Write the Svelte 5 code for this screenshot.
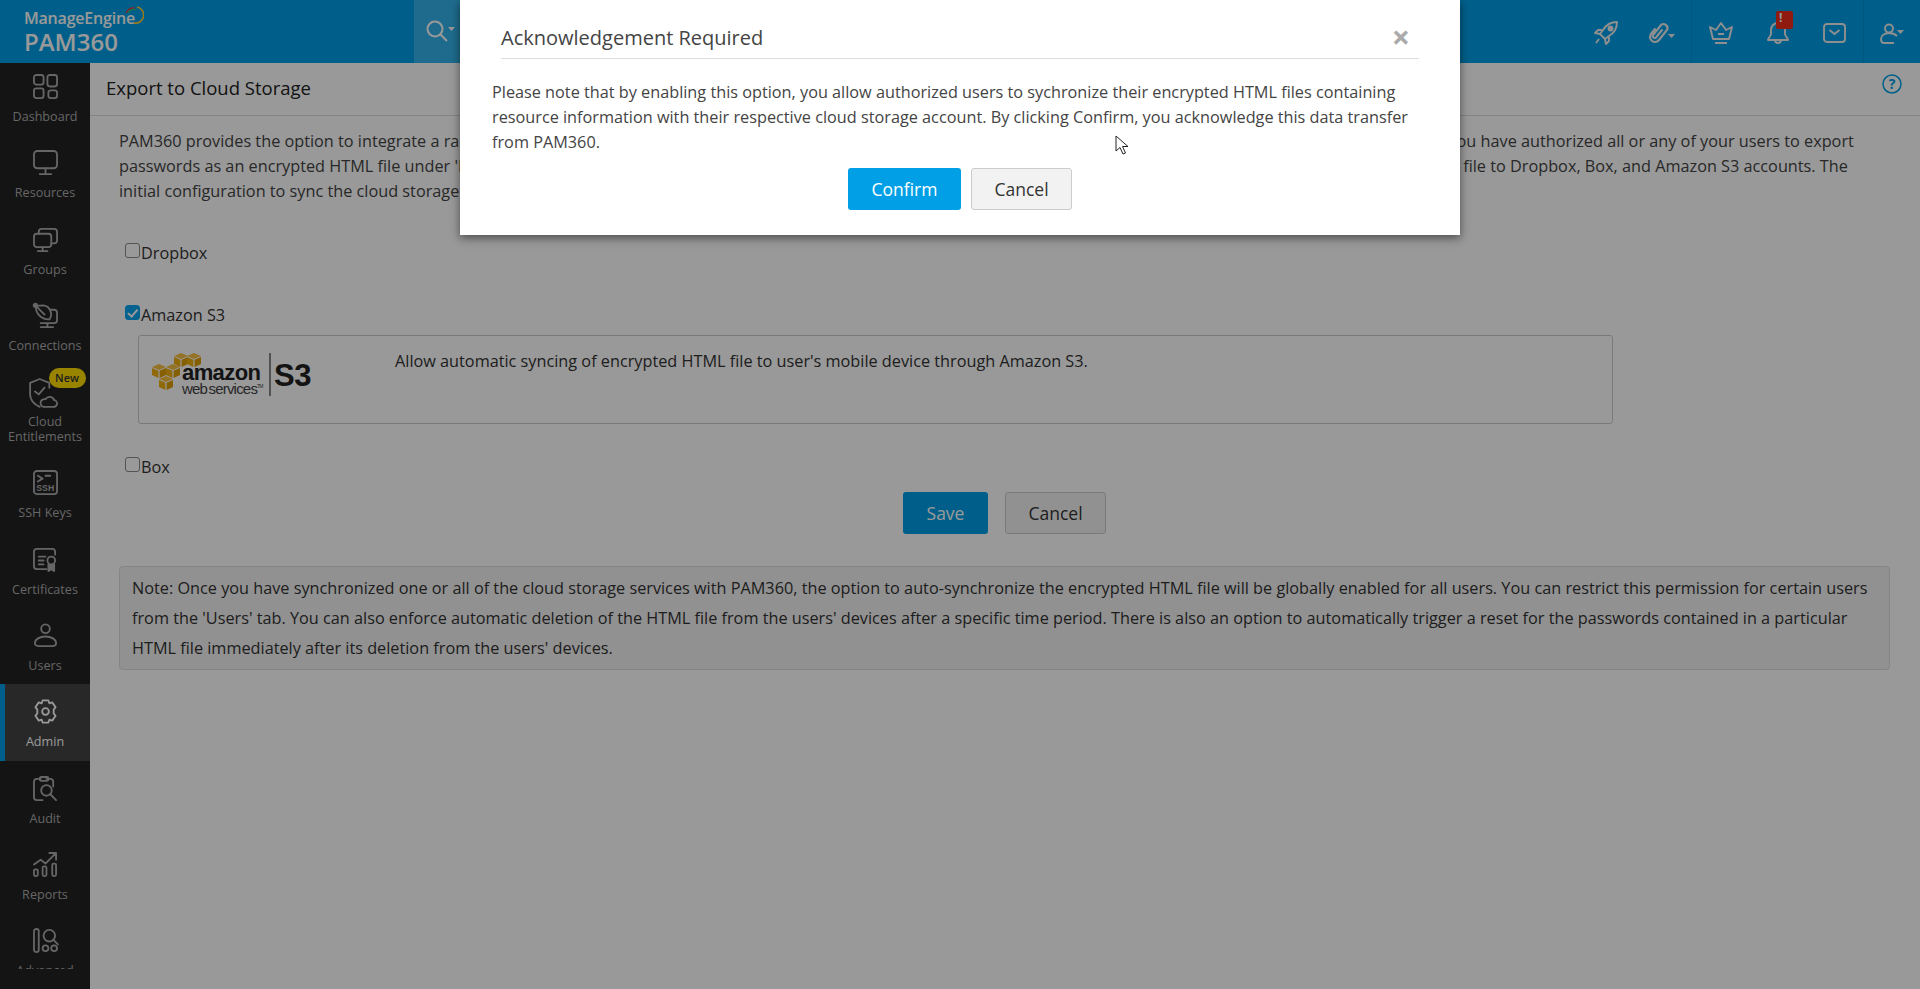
<script lang="ts">
	const navItems = [
		{ id: 'dashboard', label: 'Dashboard' },
		{ id: 'resources', label: 'Resources' },
		{ id: 'groups', label: 'Groups' },
		{ id: 'connections', label: 'Connections' },
		{ id: 'cloud', label: 'Cloud Entitlements', badge: 'New' },
		{ id: 'ssh', label: 'SSH Keys' },
		{ id: 'certificates', label: 'Certificates' },
		{ id: 'users', label: 'Users' },
		{ id: 'admin', label: 'Admin', active: true },
		{ id: 'audit', label: 'Audit' },
		{ id: 'reports', label: 'Reports' },
		{ id: 'advanced', label: 'Advanced' }
	];
	const cubes = [
		[22, 0], [35, 0], [0, 11], [14, 11], [7, 23]
	];
</script>

<div class="page">
	<header class="topbar">
		<div class="logo">
			<div class="me">ManageEngine<svg class="arc" viewBox="0 0 20 18" width="20" height="18"><path d="M2 7 A8 8 0 0 1 11 2" fill="none" stroke="#e33" stroke-width="1.2"/><path d="M4 7 A6 6 0 0 1 12 4" fill="none" stroke="#3b7" stroke-width="1.2"/><path d="M13 1 A8 8 0 0 1 10 17" fill="none" stroke="#fc3" stroke-width="1.6"/></svg></div>
			<div class="pam">PAM360</div>
		</div>
		<button class="search" aria-label="Search">
			<svg width="30" height="24" viewBox="0 0 30 24" fill="none" stroke="currentColor" stroke-width="2"><circle cx="10" cy="10" r="7.5"/><path d="M15.5 15.5 L22 22"/><path d="M23 8h7l-3.5 4z" fill="currentColor" stroke="none"/></svg>
		</button>
		<div class="spacer"></div>
		<div class="tools">
			<span class="tool">
				<svg width="26" height="26" viewBox="0 0 26 26" fill="none" stroke="currentColor" stroke-width="1.9" stroke-linejoin="round"><path d="M24 2c-6 0-11 3-14 8l-3 4 5 5 4-3c5-3 8-8 8-14z"/><circle cx="17.500" cy="8.500" r="2" fill="currentColor"/><path d="M9 10H5l-3 3 5 1M16 17v4l-3 3-1-5M6 19l-3 4"/></svg>
			</span>
			<span class="tool link">
				<svg width="34" height="26" viewBox="0 0 34 26" fill="none" stroke="currentColor" stroke-width="2.1" stroke-linecap="round"><path d="M16 10l-6 7.500a2 2 0 0 1-3-2.500l8-10a4 4 0 0 1 6 5l-8 10a5 5 0 0 1-8-6l4-5"/><path d="M22 14h7l-3.500 4z" fill="currentColor" stroke="none"/></svg>
			</span>
			<span class="tool sep-left">
				<svg width="24" height="26" viewBox="0 0 24 26" fill="none" stroke="currentColor" stroke-width="1.9" stroke-linejoin="round"><path d="M1 7l6 3 5-7 5 7 6-3-3 12H4z"/><path d="M9 14h6M6 23h12"/></svg>
			</span>
			<span class="tool bell">
				<svg width="26" height="26" viewBox="0 0 26 26" fill="none" stroke="currentColor" stroke-width="1.9" stroke-linejoin="round"><path d="M13 3c-4 0-7 3-7 7v4c0 2-3 4-3 6h20c0-2-3-4-3-6v-4c0-4-3-7-7-7zM10 20a3 3 0 0 0 6 0"/></svg>
				<span class="alert">!</span>
			</span>
			<span class="tool">
				<svg width="25" height="22" viewBox="0 0 25 22" fill="none" stroke="currentColor" stroke-width="1.9"><rect x="2" y="2" width="21" height="18" rx="3"/><path d="M7.500 8l5 4 5-4"/></svg>
			</span>
			<span class="tool sep-left user">
				<svg width="32" height="26" viewBox="0 0 32 26" fill="none" stroke="currentColor" stroke-width="1.9"><circle cx="13" cy="8.500" r="4"/><path d="M21 16c-2-2-5-3-8-3-5 0-8 3-8 6 0 3 1 4 3 4h10"/><path d="M21 10h7l-3.500 4z" fill="currentColor" stroke="none"/></svg>
			</span>
		</div>
	</header>

	<div class="main">
		<aside class="sidebar">
			<nav class="nav">
				{#each navItems as item}
					<div class="nav-item" class:active={item.active}>
						<span class="nav-icon">
							<svg width="25" height="25" viewBox="0 0 26 26" fill="none" stroke="currentColor" stroke-width="1.9" stroke-linejoin="round" stroke-linecap="round">
								{#if item.id === 'dashboard'}
									<rect x="1" y="1" width="10" height="10" rx="2.500"/><rect x="15" y="1" width="10" height="12" rx="2.500"/><rect x="1" y="15" width="10" height="10" rx="2.500"/><rect x="16" y="17" width="9" height="8" rx="2.500"/>
								{:else if item.id === 'resources'}
									<rect x="1" y="1" width="24" height="18" rx="3.500"/><path d="M13 19v5M7 25h12"/>
								{:else if item.id === 'groups'}
									<rect x="1" y="7" width="18" height="14" rx="3"/><path d="M6 7V5c0-2 1-3 3-3h13c2 0 3 1 3 3v9c0 2-1 3-3 3h-3M10 21v3M5 25h10"/>
								{:else if item.id === 'connections'}
									<path d="M3 3a13 13 0 0 0 14 14 9 9 0 0 0 1-9 9 9 0 0 0-7-5.500z"/><circle cx="2.500" cy="2.500" r="1.800" fill="currentColor"/><path d="M3 3l9 9"/><path d="M18 7h4c2 0 3 1 3 3v8c0 2-1 3-3 3H8M15 21v3M8 25h13"/>
								{:else if item.id === 'cloud'}
									<path d="M17 9V4L7 0-3 4v12c0 6 4 10 10 13"/><path d="M2 13l4 3 6-7"/><path d="M11 29h10a3.500 3.500 0 0 0 1-7 5 5 0 0 0-9-1 4 4 0 0 0-2 8z"/>
								{:else if item.id === 'ssh'}
									<rect x="1" y="1" width="24" height="24" rx="3"/><path d="M5 6l5 3-5 3M13 6h5"/><text x="3.500" y="21.500" class="ssh-text">SSH</text>
								{:else if item.id === 'certificates'}
									<path d="M23 8V5c0-2-1-3-3-3H4C2 2 1 3 1 5v15c0 2 1 3 3 3h10"/><path d="M6 10h7M6 14h5M6 18h5"/><circle cx="19" cy="14" r="4"/><path d="M16 18v7l3-2 3 2v-7" fill="currentColor"/>
								{:else if item.id === 'users'}
									<circle cx="13" cy="6" r="4.500"/><path d="M2 21c0-4 5-7 11-7s11 3 11 7c0 2-2 3-4 3H6c-2 0-4-1-4-3z"/>
								{:else if item.id === 'admin'}
									<path d="M10 1.500h6l1 3 3-1 3.500 5-2 2.500v4l2 2.500-3.500 5-3-1-1 3h-6l-1-3-3 1-3.500-5 2-2.500v-4l-2-2.500 3.500-5 3 1z"/><circle cx="13" cy="13" r="3.500"/>
								{:else if item.id === 'audit'}
									<path d="M8 3H4C2 3 1 4 1 6v16c0 2 1 3 3 3h6M21 11V6c0-2-1-3-3-3h-4"/><rect x="7" y="1" width="9" height="4" rx="1.500"/><circle cx="14" cy="15" r="5.500"/><path d="M18 19l6 6"/>
								{:else if item.id === 'reports'}
									<path d="M1 13l7-5 5 4 10-10M17 1h7v7"/><rect x="1" y="18" width="4" height="7" rx="1.500"/><rect x="10" y="15" width="4" height="10" rx="1.500"/><rect x="20" y="12" width="4" height="13" rx="1.500"/>
								{:else}
									<rect x="1" y="1" width="5" height="24" rx="2.500"/><circle cx="17" cy="8" r="6"/><path d="M21 12l5 5"/><circle cx="13" cy="21" r="3"/><circle cx="22" cy="21" r="3"/>
								{/if}
							</svg>
							{#if item.badge}<span class="badge">{item.badge}</span>{/if}
						</span>
						<span class="nav-label">{item.label}</span>
					</div>
				{/each}
			</nav>
		</aside>

		<main class="content">
			<div class="title-row">
				<h1>Export to Cloud Storage</h1>
				<svg width="20" height="20" viewBox="0 0 20 20" fill="none" class="help"><circle cx="10" cy="10" r="9" stroke="currentColor" stroke-width="1.500"/><text x="10" y="15" text-anchor="middle" class="help-text">?</text></svg>
			</div>
			<div class="body">
				<p class="intro">PAM360 provides the option to integrate a range of popular cloud storage services to let users synchronize and securely keep up-to-date offline copies, of all their passwords. If you have authorized all or any of your users to export<br>passwords as an encrypted HTML file under 'Personal' settings, they can choose to have it synced automatically at anytime. Users can now also easily upload the encrypted HTML file to Dropbox, Box, and Amazon S3 accounts. The<br>initial configuration to sync the cloud storage accounts has to be performed here.</p>

				<label class="check first"><input type="checkbox" />Dropbox</label>
				<label class="check second"><input type="checkbox" checked />Amazon S3</label>
				<div class="s3-box">
					<div class="s3-logo">
						<svg width="50" height="37" viewBox="0 0 50 37" class="cubes">
							{#each cubes as [x, y]}
								<g transform="translate({x} {y})">
									<path d="M7 0l7 3-7 3-7-3z" fill="#f8c040"/>
									<path d="M0 4l6.400 2.800V14L0 11z" fill="#f0b010"/>
									<path d="M14 4L7.600 6.800V14L14 11z" fill="#e0a000"/>
								</g>
							{/each}
						</svg>
						<div class="aws-text">
							<span class="amazon">amazon</span>
							<span class="ws">web services<sup>TM</sup></span>
						</div>
						<span class="s3-rule"></span>
						<span class="s3-mark">S3</span>
					</div>
					<p>Allow automatic syncing of encrypted HTML file to user's mobile device through Amazon S3.</p>
				</div>
				<label class="check third"><input type="checkbox" />Box</label>

				<div class="actions">
					<button class="btn primary save">Save</button>
					<button class="btn plain cancel">Cancel</button>
				</div>

				<div class="note">Note: Once you have synchronized one or all of the cloud storage services with PAM360, the option to auto-synchronize the encrypted HTML file will be globally enabled for all users. You can restrict this permission for certain users from the 'Users' tab. You can also enforce automatic deletion of the HTML file from the users' devices after a specific time period. There is also an option to automatically trigger a reset for the passwords contained in a particular HTML file immediately after its deletion from the users' devices.</div>
			</div>
		</main>
	</div>

	<div class="overlay"></div>

	<div class="modal">
		<div class="modal-head">
			<h2>Acknowledgement Required</h2>
			<span class="close">×</span>
		</div>
		<p class="modal-text">Please note that by enabling this option, you allow authorized users to sychronize their encrypted HTML files containing resource information with their respective cloud storage account. By clicking Confirm, you acknowledge this data transfer from PAM360.</p>
		<div class="modal-actions">
			<button class="btn primary confirm">Confirm</button>
			<button class="btn plain modal-cancel">Cancel</button>
		</div>
	</div>

	<svg class="cursor" width="14" height="21" viewBox="0 0 14 21"><path d="M1 1v15l4-3.500 3 6.500 2.500-1-3-6.500h5.500z" fill="#fff" stroke="#222" stroke-width="1"/></svg>
</div>

<style>
	:global(body) {
		margin: 0;
		background: #fff;
		font-family: "Open Sans", "Liberation Sans", sans-serif;
	}

	.page {
		position: relative;
		width: 1920px;
		height: 989px;
		overflow: hidden;
		color: #333;
	}

	.topbar {
		height: 63px;
		background: #009fe6;
		display: flex;
		align-items: stretch;
		color: #fff;
	}

	.logo {
		width: 414px;
		box-sizing: border-box;
		padding: 8px 0 0 24px;
		color: #fff;
	}

	.me {
		display: flex;
		font-size: 16px;
		font-weight: 600;
		line-height: 20px;
		position: relative;
		letter-spacing: -0.2px;
	}

	.arc {
		position: absolute;
		left: 100px;
		top: -2px;
	}

	.pam {
		font-size: 24px;
		line-height: 28px;
		font-weight: 600;
	}

	.search {
		width: 46px;
		border: 0;
		padding: 1px 0 0 11px;
		background: #33b2eb;
		color: #fff;
		text-align: left;
	}

	.spacer {
		flex: 1;
	}

	.tools {
		display: flex;
		align-items: stretch;
	}

	.tool {
		width: 57px;
		display: flex;
		align-items: center;
		justify-content: center;
		position: relative;
		padding-top: 2px;
		color: #eee;
	}

	.sep-left {
		border-left: 1px solid #0091d2;
	}

	.user {
		width: 56px;
	}

	.alert {
		position: absolute;
		left: 27px;
		top: 11px;
		width: 17px;
		height: 18px;
		box-sizing: border-box;
		padding-left: 3px;
		background: #f02a1c;
		border-radius: 2px;
		color: #fff;
		font-size: 12px;
		font-weight: 700;
		line-height: 14px;
	}

	.main {
		display: flex;
		height: 926px;
	}

	.sidebar {
		width: 90px;
		flex: none;
		background: #222;
		padding-bottom: 20px;
		box-sizing: border-box;
	}

	.nav {
		height: 100%;
		overflow: hidden;
	}

	.nav-item {
		box-sizing: border-box;
		height: 76.300px;
		padding-top: 15px;
		display: flex;
		flex-direction: column;
		align-items: center;
		color: #aaa;
		font-size: 12.600px;
		line-height: 14.500px;
		text-align: center;
	}

	.nav-item:first-child {
		height: 72.300px;
		padding-top: 11px;
	}

	.nav-item:nth-child(5) {
		height: 91.300px;
	}

	.nav-item.active {
		background: #444;
		border-left: 5px solid #009fe6;
		color: #fff;
		padding-right: 5px;
	}

	.nav-icon {
		position: relative;
		display: block;
		height: 25px;
		margin-bottom: 11px;
	}

	.nav-icon svg {
		overflow: visible;
	}

	.nav-label {
		display: block;
		white-space: normal;
		width: 80px;
	}

	.ssh-text {
		font-family: "Liberation Sans", sans-serif;
		font-size: 9px;
		font-weight: 700;
		fill: currentColor;
		stroke: none;
	}

	.badge {
		position: absolute;
		left: 16px;
		top: -11px;
		width: 37px;
		height: 20px;
		border-radius: 10px;
		background: #ffdc00;
		color: #333;
		font-size: 11px;
		font-weight: 600;
		line-height: 20px;
	}

	.content {
		flex: 1;
		min-width: 0;
	}

	.title-row {
		height: 53px;
		box-sizing: border-box;
		border-bottom: 1px solid #ddd;
		display: flex;
		align-items: center;
		justify-content: space-between;
		padding: 0 18px 3px 16px;
		color: #009fe6;
	}

	.help {
		margin-top: -8px;
	}

	h1 {
		margin: 0;
		font-size: 18.500px;
		font-weight: 400;
		color: #222;
	}

	.help-text {
		font-size: 14px;
		font-weight: 700;
		fill: currentColor;
	}

	.body {
		padding: 13px 29px 0;
	}

	.intro {
		margin: 0;
		font-size: 16.250px;
		line-height: 25px;
		white-space: nowrap;
		color: #444;
	}

	.check {
		display: flex;
		align-items: flex-start;
		font-size: 16.250px;
		line-height: 24px;
		margin-left: 6px;
	}

	.check input {
		appearance: none;
		position: relative;
		box-sizing: border-box;
		width: 15px;
		height: 15px;
		margin: 2px 1px 0 0;
		background: #fff;
		border: 1.500px solid #8a8a8a;
		border-radius: 3px;
		flex: none;
	}

	.check input:checked {
		background: #0aa5ef;
		border-color: #0aa5ef;
	}

	.check input:checked::after {
		content: "";
		position: absolute;
		left: 3.500px;
		top: 0.500px;
		width: 3.500px;
		height: 7.500px;
		border: solid #fff;
		border-width: 0 2.500px 2.500px 0;
		transform: rotate(40deg);
	}

	.first {
		margin-top: 37px;
	}

	.second {
		margin-top: 38px;
	}

	.s3-box {
		margin: 8px 0 0 19px;
		width: 1475px;
		height: 89px;
		box-sizing: border-box;
		border: 1px solid #ccc;
		border-radius: 3px;
		display: flex;
		padding: 13px 0 0 13px;
	}

	.s3-box p {
		margin: 2px 0 0 0;
		font-size: 16.250px;
		line-height: 20px;
	}

	.s3-logo {
		width: 243px;
		flex: none;
		display: flex;
		align-items: flex-start;
		color: #222;
		margin-top: 4px;
		position: relative;
	}

	.cubes {
		width: 50px;
		flex: none;
		margin-right: -20px;
	}

	.aws-text {
		display: flex;
		flex-direction: column;
		width: 87px;
		flex: none;
		margin-top: 11px;
		white-space: nowrap;
	}

	.amazon {
		font-family: "Liberation Sans", sans-serif;
		font-size: 22px;
		font-weight: 700;
		line-height: 18px;
		letter-spacing: -0.6px;
	}

	.ws {
		font-family: "Liberation Sans", sans-serif;
		font-size: 15px;
		line-height: 13px;
		letter-spacing: -0.8px;
		word-spacing: -2px;
		color: #444;
	}

	.ws sup {
		font-size: 5px;
		line-height: 0;
	}

	.s3-rule {
		width: 2px;
		height: 43px;
		background: #888;
		margin-right: 3px;
		flex: none;
	}

	.s3-mark {
		font-family: "Liberation Sans", sans-serif;
		font-size: 31px;
		font-weight: 700;
		line-height: 46px;
		letter-spacing: -0.5px;
	}

	.third {
		margin-top: 31px;
	}

	.actions {
		display: flex;
		gap: 17px;
		margin: 13px 0 0 784px;
	}

	.btn {
		box-sizing: border-box;
		height: 42px;
		border-radius: 3px;
		font: 400 17.500px "Open Sans", sans-serif;
		padding: 0;
	}

	.primary {
		background: #009fe6;
		border: 0;
		color: #fff;
	}

	.plain {
		background: #f2f2f2;
		border: 1px solid #ccc;
		color: #333;
	}

	.save {
		width: 85px;
	}

	.cancel {
		width: 101px;
	}

	.note {
		margin-top: 32px;
		width: 1771px;
		height: 104px;
		box-sizing: border-box;
		background: #f2f2f2;
		border: 1px solid #ddd;
		border-radius: 4px;
		padding: 6px 12px;
		font-size: 16.250px;
		line-height: 30px;
	}

	.overlay {
		position: absolute;
		inset: 0;
		background: rgba(0, 0, 0, 0.4);
	}

	.modal {
		position: absolute;
		left: 460px;
		top: 0;
		width: 1000px;
		height: 235px;
		box-sizing: border-box;
		background: #fff;
		box-shadow: 0 3px 9px rgba(0, 0, 0, 0.5);
		padding: 0 32px;
	}

	.modal-head {
		display: flex;
		justify-content: space-between;
		align-items: center;
		height: 59px;
		padding-top: 16px;
		box-sizing: border-box;
		margin: 0 9px;
		border-bottom: 1px solid #ddd;
	}

	h2 {
		margin: 0;
		font-size: 20px;
		font-weight: 400;
		color: #444;
	}

	.close {
		font-size: 32px;
		line-height: 30px;
		font-weight: 700;
		color: #aaa;
		margin-right: 9px;
	}

	.modal-text {
		margin: 21px 0 0;
		font-size: 16.250px;
		line-height: 25px;
		color: #444;
		width: 925px;
	}

	.modal-actions {
		display: flex;
		gap: 10px;
		margin: 13px 0 0 356px;
	}

	.confirm {
		width: 113px;
	}

	.modal-cancel {
		width: 101px;
	}

	.cursor {
		position: absolute;
		left: 1115px;
		top: 135px;
	}
</style>
